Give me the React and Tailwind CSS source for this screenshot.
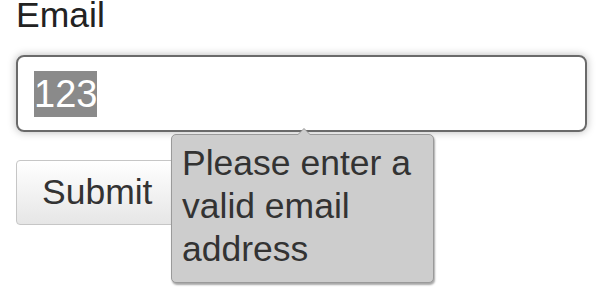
export default function App() {
  return (
    <div className="relative h-[289px] bg-white pl-4 pr-[17px] font-['Liberation_Sans',Arial,sans-serif] text-[35.5px]">
      <label className="block leading-[30px] text-[#222]">Email</label>

      {/* focused email input with selected text */}
      <div className="mt-[25px] flex h-[77px] items-center rounded-lg border-2 border-[#6a6a6a] px-4 shadow-[0_0_8px_rgba(0,0,0,0.28)]">
        <span className="bg-[#8a8a8a] text-[38px] leading-[46px] text-white">123</span>
      </div>

      <button className="mt-[28px] h-[65px] rounded-[4px] border border-[#c6c6c6] bg-gradient-to-b from-white to-[#e6e6e6] px-[25px] text-[#333]">
        Submit
      </button>

      {/* validation bubble */}
      <div className="absolute left-[171px] top-[134px] w-[263px] rounded-[5px] border border-[#9a9a9a] bg-[#cdcdcd] px-[10px] pt-[7px] pb-[11px] leading-[43px] text-[#333] shadow-[1px_2px_2px_rgba(0,0,0,0.35)]">
        <div className="absolute -top-[7px] left-[125px] h-0 w-0 border-x-[7px] border-b-[7px] border-x-transparent border-b-[#9a9a9a]" />
        <div className="absolute -top-[6px] left-[126px] h-0 w-0 border-x-[6px] border-b-[6px] border-x-transparent border-b-[#cdcdcd]" />
        Please enter a valid email address
      </div>
    </div>
  );
}
